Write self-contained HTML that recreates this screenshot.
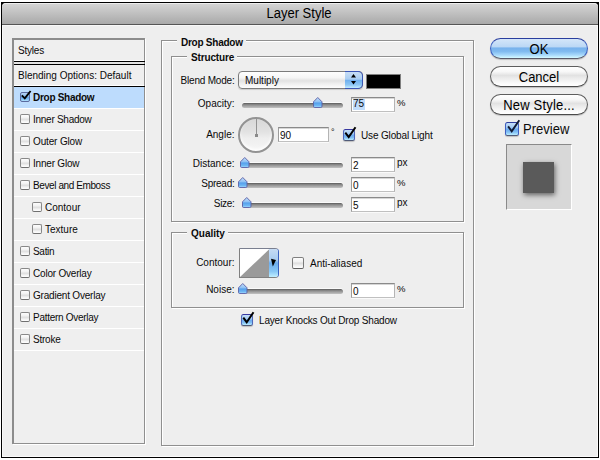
<!DOCTYPE html>
<html><head><meta charset="utf-8">
<style>
*{margin:0;padding:0;box-sizing:border-box}
html,body{width:600px;height:460px;overflow:hidden;background:#fff}
body{position:relative;font-family:"Liberation Sans",sans-serif;color:#000}
.a{position:absolute}
.t{position:absolute;font-size:10px;line-height:12px;white-space:nowrap;color:#0a0a0a}
.b{font-weight:bold}
.r{text-align:right}
#win{position:absolute;left:1px;top:2px;width:598px;height:456px;background:#000}
#body{position:absolute;left:2px;top:25px;width:596px;height:432px;background:#eeeeee;box-shadow:inset 0 1px 0 #f8f8f8,inset 1px 0 0 #f8f8f8,inset -1px 0 0 #fafafa,inset 0 -1px 0 #fafafa}
#title{position:absolute;left:2px;top:3px;width:596px;height:21px;background:linear-gradient(#d6d6d6,#a9a9a9);border-radius:4px 4px 0 0;box-shadow:inset 0 1px 0 #ededed}
#tline{position:absolute;left:2px;top:24px;width:596px;height:1px;background:#555}
/* group boxes */
.grp{position:absolute;border:1px solid #8f8f8f;box-shadow:inset 1px 1px 0 #fff,1px 1px 0 #fff}
.lg{position:absolute;background:#eeeeee;height:12px}
/* list */
#list{position:absolute;left:12px;top:38px;width:133px;height:406px;border-top:2px solid #8c8c8c;border-left:2px solid #8c8c8c;border-right:1px solid #8f8f8f;border-bottom:1px solid #8f8f8f;background:#efefef;box-shadow:1px 1px 0 #fff}
.row{position:absolute;left:14px;width:130px;height:1px;background:#fff}
.cb{position:absolute;width:10px;height:10px;border:1px solid #888;border-bottom-color:#707070;border-radius:2px;background:linear-gradient(#fdfdfd 0%,#f0f0f0 40%,#dcdcdc 50%,#f4f4f4 80%,#fff 100%)}
.cbon{border-color:#5b6a9e;background:linear-gradient(#b4d2f4 0%,#94c0f0 40%,#64a5ea 55%,#84c2f4 80%,#b6e4ff 100%)}
.tick{position:absolute}
.cbm{position:absolute;border:1px solid #4f66b8;border-top-color:#3838a0;border-bottom-color:#505a78;border-radius:2.5px;background:linear-gradient(#c4def8 0%,#a6cdf4 35%,#6caaee 52%,#7fbdf3 75%,#baeeff 100%);box-shadow:0 1px 1px rgba(0,0,0,.2)}

/* sliders */
.track{position:absolute;height:5px;border-radius:3px;background:linear-gradient(#5a5a5a 0%,#8c8c8c 35%,#a9a9a9 70%,#c2c2c2 100%);box-shadow:0 -1px 0 #fafafa}
.thumb{position:absolute;width:10px;height:10px}
.fld{position:absolute;background:#fff;border:1px solid #9a9a9a;border-color:#8a8a8a #b4b4b4 #c0c0c0 #9c9c9c;box-shadow:inset 0 1px 0 #d6d6d6,0 1px 0 #fafafa}
.btn{position:absolute;left:490px;width:98px;height:21px;border-radius:10.5px;border:1px solid #5e5e5e;border-bottom-color:#4a4a4a;background:linear-gradient(#ffffff 0%,#f7f7f7 25%,#e2e2e2 45%,#ececec 60%,#fafafa 85%,#fff 100%);box-shadow:0 1px 1px rgba(0,0,0,.2)}
.btxt{position:absolute;font-size:14px;line-height:16px;white-space:nowrap;text-align:center;left:490px;width:98px;color:#000;transform:scaleX(.93)}
</style></head><body>
<div id="win"></div>
<div id="title"></div>
<div id="tline"></div>
<div id="body"></div>
<div class="t" style="left:249px;width:100px;text-align:center;top:5px;font-size:14px;line-height:16px;color:#000;transform:scaleX(.93)">Layer Style</div>

<!-- Styles list -->
<div id="list"></div>
<div class="t" style="left:18px;top:45px;letter-spacing:-.2px">Styles</div>
<div class="a" style="left:14px;top:60px;width:130px;height:1px;background:#fff"></div>
<div class="a" style="left:14px;top:61px;width:131px;height:1px;background:#000"></div>
<div class="a" style="left:14px;top:62px;width:130px;height:2px;background:#e4e4e4"></div>
<div class="a" style="left:14px;top:64px;width:131px;height:1px;background:#000"></div>
<div class="t" style="left:18px;top:70px">Blending Options: Default</div>
<div class="a" style="left:14px;top:85px;width:130px;height:1px;background:#fff"></div>
<div class="a" style="left:14px;top:86px;width:131px;height:1px;background:#000"></div>
<div class="a" style="left:14px;top:87px;width:130px;height:21px;background:#bddcfd"></div>
<div class="row" style="top:108px"></div>
<div class="cb cbon" style="left:20px;top:92px"></div>
<svg class="tick" style="left:20px;top:89px" width="14" height="14"><path d="M1.8 6.3 L4.8 9.4 L10.6 2" fill="none" stroke="#000" stroke-width="1.9"/></svg>
<div class="t b" style="left:33px;top:92px;letter-spacing:-0.28px">Drop Shadow</div>
<div class="row" style="top:130px"></div>
<div class="cb" style="left:20px;top:114px"></div>
<div class="t" style="left:33px;top:114px;letter-spacing:-0.27px">Inner Shadow</div>
<div class="row" style="top:152px"></div>
<div class="cb" style="left:20px;top:136px"></div>
<div class="t" style="left:33px;top:136px;letter-spacing:-0.15px">Outer Glow</div>
<div class="row" style="top:174px"></div>
<div class="cb" style="left:20px;top:158px"></div>
<div class="t" style="left:33px;top:158px;letter-spacing:-0.2px">Inner Glow</div>
<div class="row" style="top:196px"></div>
<div class="cb" style="left:20px;top:180px"></div>
<div class="t" style="left:33px;top:180px;letter-spacing:-0.4px">Bevel and Emboss</div>
<div class="row" style="top:218px"></div>
<div class="cb" style="left:32px;top:202px"></div>
<div class="t" style="left:45px;top:202px">Contour</div>
<div class="row" style="top:240px"></div>
<div class="cb" style="left:32px;top:224px"></div>
<div class="t" style="left:45px;top:224px">Texture</div>
<div class="row" style="top:262px"></div>
<div class="cb" style="left:20px;top:246px"></div>
<div class="t" style="left:33px;top:246px;letter-spacing:-0.3px">Satin</div>
<div class="row" style="top:284px"></div>
<div class="cb" style="left:20px;top:268px"></div>
<div class="t" style="left:33px;top:268px;letter-spacing:-0.2px">Color Overlay</div>
<div class="row" style="top:306px"></div>
<div class="cb" style="left:20px;top:290px"></div>
<div class="t" style="left:33px;top:290px;letter-spacing:-0.2px">Gradient Overlay</div>
<div class="row" style="top:328px"></div>
<div class="cb" style="left:20px;top:312px"></div>
<div class="t" style="left:33px;top:312px;letter-spacing:-0.28px">Pattern Overlay</div>
<div class="row" style="top:350px"></div>
<div class="cb" style="left:20px;top:334px"></div>
<div class="t" style="left:33px;top:334px;letter-spacing:-0.24px">Stroke</div>
<!-- middle panel -->
<div class="grp" style="left:161px;top:40px;width:313px;height:406px"></div>
<div class="lg" style="left:177px;top:35px;width:69px"></div>
<div class="t b" style="left:181px;top:37px;letter-spacing:-.25px">Drop Shadow</div>
<div class="grp" style="left:171px;top:56px;width:293px;height:166px"></div>
<div class="lg" style="left:187px;top:51px;width:50px"></div>
<div class="t b" style="left:191px;top:52px;letter-spacing:-.15px">Structure</div>

<div class="t r" style="left:150px;width:84.5px;top:75px;letter-spacing:-.2px">Blend Mode:</div>
<div class="a" style="left:238px;top:71px;width:125px;height:18px;border:1px solid #7c7c7c;border-radius:4px;background:linear-gradient(#fefefe 0%,#f6f6f6 35%,#e2e2e2 55%,#f0f0f0 75%,#fdfdfd 100%);box-shadow:0 1px 1px rgba(0,0,0,.15)"></div>
<div class="a" style="left:345px;top:71px;width:18px;height:18px;border:1px solid #3a55b5;border-left:none;border-radius:0 5px 5px 0;background:linear-gradient(#c8def5 0%,#a9cdf2 45%,#6fb0ee 52%,#8cc6f4 80%,#c4ecff 100%)"></div>
<svg class="a" style="left:345px;top:71px" width="18" height="18"><path d="M6 6.5 L8.5 3 L11 6.5 Z M6 10 L11 10 L8.5 13.5 Z" fill="#000"/></svg>
<div class="t" style="left:245px;top:75px">Multiply</div>
<div class="a" style="left:366px;top:74px;width:35px;height:15px;border:1px solid #808080;background:#000"></div>

<div class="t r" style="left:150px;width:84.5px;top:98px">Opacity:</div>
<div class="track" style="left:242px;top:103px;width:101px"></div>
<div class="fld" style="left:351px;top:97px;width:44px;height:15px"></div>
<div class="a" style="left:353px;top:99px;width:12px;height:11px;background:#c0dcfb"></div>
<div class="t" style="left:353px;top:98px">75</div>
<div class="t" style="left:397px;top:97px;font-size:9.5px">%</div>

<div class="t r" style="left:150px;width:84.5px;top:129px">Angle:</div>
<div class="a" style="left:238px;top:117px;width:36px;height:36px;border-radius:50%;border:2px solid #939393;background:linear-gradient(#d8d8d8 0%,#e2e2e2 40%,#eeeeee 60%,#f6f6f6 100%);box-shadow:inset 0 -2px 3px rgba(255,255,255,.9)"></div>
<div class="a" style="left:256px;top:118px;width:1px;height:17px;background:#929292"></div>
<div class="a" style="left:255px;top:134px;width:3px;height:3px;background:#8a8a8a"></div>
<div class="fld" style="left:278px;top:127px;width:51px;height:15px"></div>
<div class="t" style="left:280px;top:130px">90</div>
<div class="t" style="left:331px;top:126px;font-size:9px">°</div>
<div class="cbm" style="left:343px;top:129px;width:12px;height:12px"></div>
<svg class="tick" style="left:343px;top:125px" width="15" height="15"><path d="M2.3 7.7 L5.7 12.1 L12.5 2.2" fill="none" stroke="#000" stroke-width="2"/></svg>
<div class="t" style="left:361px;top:130px;letter-spacing:-.15px">Use Global Light</div>

<div class="t r" style="left:150px;width:84.5px;top:158px">Distance:</div>
<div class="track" style="left:242px;top:163px;width:101px"></div>
<div class="fld" style="left:351px;top:157px;width:44px;height:15px"></div>
<div class="t" style="left:353px;top:160px">2</div>
<div class="t" style="left:397px;top:157px">px</div>

<div class="t r" style="left:150px;width:84.5px;top:178px;letter-spacing:-.25px">Spread:</div>
<div class="track" style="left:242px;top:183px;width:101px"></div>
<div class="fld" style="left:351px;top:177px;width:44px;height:15px"></div>
<div class="t" style="left:353px;top:180px">0</div>
<div class="t" style="left:397px;top:177px;font-size:9.5px">%</div>

<div class="t r" style="left:150px;width:84.5px;top:198px;letter-spacing:-.3px">Size:</div>
<div class="track" style="left:242px;top:203px;width:101px"></div>
<div class="fld" style="left:351px;top:197px;width:44px;height:15px"></div>
<div class="t" style="left:353px;top:200px">5</div>
<div class="t" style="left:397px;top:197px">px</div>

<div class="grp" style="left:171px;top:232px;width:293px;height:76px"></div>
<div class="lg" style="left:187px;top:227px;width:41px"></div>
<div class="t b" style="left:191px;top:228px">Quality</div>
<div class="t r" style="left:150px;width:84.5px;top:257px">Contour:</div>
<div class="a" style="left:239px;top:248px;width:40px;height:30px;border:1px solid #808080;border-right-color:#3a62c0;border-top-color:#7a7f90;border-radius:0 4px 4px 0;background:#fff;overflow:hidden">
 <svg class="a" style="left:0;top:0" width="30" height="28"><path d="M0 28 L29.5 0 L29.5 28 Z" fill="#9a9a9a"/></svg>
 <div class="a" style="left:29px;top:0;width:10px;height:28px;border-right:1px solid #4a8ae0;background:linear-gradient(#c6dcf4 0%,#a8ccf1 40%,#6cadee 50%,#8ac8f6 80%,#c0efff 100%)"></div>
 <svg class="a" style="left:29px;top:0" width="10" height="28"><path d="M2 9.8 L7 11 L3.8 17.5 Z" fill="#000"/></svg>
</div>
<div class="cb" style="left:292px;top:257px;width:12px;height:12px;border-color:#808080 #7a7a7a #5f5f5f"></div>
<div class="t" style="left:310px;top:258px">Anti-aliased</div>
<div class="t r" style="left:150px;width:84.5px;top:284px">Noise:</div>
<div class="track" style="left:242px;top:289px;width:101px"></div>
<div class="fld" style="left:351px;top:283px;width:44px;height:15px"></div>
<div class="t" style="left:353px;top:286px">0</div>
<div class="t" style="left:397px;top:283px;font-size:9.5px">%</div>

<div class="cbm" style="left:241px;top:314px;width:12px;height:12px"></div>
<svg class="tick" style="left:241px;top:310px" width="15" height="15"><path d="M2.3 7.7 L5.7 12.2 L12.5 2.3" fill="none" stroke="#000" stroke-width="2"/></svg>
<div class="t" style="left:259px;top:315px;letter-spacing:-.18px">Layer Knocks Out Drop Shadow</div>

<!-- thumbs -->
<svg class="thumb" style="left:313px;top:97px;width:10px;height:11px" viewBox="0 0 10 11"><defs><linearGradient id="tg" x1="0" y1="0" x2="0" y2="1"><stop offset="0" stop-color="#c4e0fb"/><stop offset=".42" stop-color="#8fc1f3"/><stop offset=".55" stop-color="#55a0ec"/><stop offset=".8" stop-color="#6db6f3"/><stop offset="1" stop-color="#a6dcff"/></linearGradient></defs><path d="M4.75 0.5 L9 4.8 L9 9.3 Q9 10.5 7.8 10.5 L1.7 10.5 Q0.5 10.5 0.5 9.3 L0.5 4.8 Z" fill="url(#tg)" stroke="#5b5fa6" stroke-width=".9"/></svg>
<svg class="thumb" style="left:240px;top:157px;width:10px;height:11px" viewBox="0 0 10 11"><path d="M4.75 0.5 L9 4.8 L9 9.3 Q9 10.5 7.8 10.5 L1.7 10.5 Q0.5 10.5 0.5 9.3 L0.5 4.8 Z" fill="url(#tg)" stroke="#5b5fa6" stroke-width=".9"/></svg>
<svg class="thumb" style="left:238px;top:177px;width:10px;height:11px" viewBox="0 0 10 11"><path d="M4.75 0.5 L9 4.8 L9 9.3 Q9 10.5 7.8 10.5 L1.7 10.5 Q0.5 10.5 0.5 9.3 L0.5 4.8 Z" fill="url(#tg)" stroke="#5b5fa6" stroke-width=".9"/></svg>
<svg class="thumb" style="left:242px;top:197px;width:10px;height:11px" viewBox="0 0 10 11"><path d="M4.75 0.5 L9 4.8 L9 9.3 Q9 10.5 7.8 10.5 L1.7 10.5 Q0.5 10.5 0.5 9.3 L0.5 4.8 Z" fill="url(#tg)" stroke="#5b5fa6" stroke-width=".9"/></svg>
<svg class="thumb" style="left:238px;top:283px;width:10px;height:11px" viewBox="0 0 10 11"><path d="M4.75 0.5 L9 4.8 L9 9.3 Q9 10.5 7.8 10.5 L1.7 10.5 Q0.5 10.5 0.5 9.3 L0.5 4.8 Z" fill="url(#tg)" stroke="#5b5fa6" stroke-width=".9"/></svg>

<!-- right buttons -->
<div class="btn" style="top:38px;border-color:#2a3e9e #3a5fc0 #5a5a6a;background:linear-gradient(#d4e6f9 0%,#bcd8f5 40%,#78b2ec 48%,#7fbaef 65%,#a9dafc 85%,#d6faff 100%)"></div>
<div class="btxt" style="top:41px">OK</div>
<div class="btn" style="top:66px"></div>
<div class="btxt" style="top:69px">Cancel</div>
<div class="btn" style="top:94px"></div>
<div class="btxt" style="top:97px;letter-spacing:.2px">New Style...</div>
<div class="cbm" style="left:505px;top:122px;width:14px;height:14px;border-color:#2f3f9f #3f5fc0 #505a78"></div>
<svg class="tick" style="left:505px;top:118px" width="17" height="17"><path d="M3.1 8.4 L6.7 13.3 L14.3 2.2" fill="none" stroke="#111a33" stroke-width="1.9"/></svg>
<div class="t" style="left:523px;top:121px;font-size:14px;line-height:16px;transform:scaleX(.93);transform-origin:0 0">Preview</div>
<div class="a" style="left:506px;top:144px;width:66px;height:66px;border:1px solid #8a8a8a;border-right-color:#fff;border-bottom-color:#fff;background:#d8d8d8"></div>
<div class="a" style="left:523px;top:162px;width:31px;height:31px;background:#5a5a5a;box-shadow:1px 2px 5px rgba(0,0,0,.55)"></div>
</body></html>
